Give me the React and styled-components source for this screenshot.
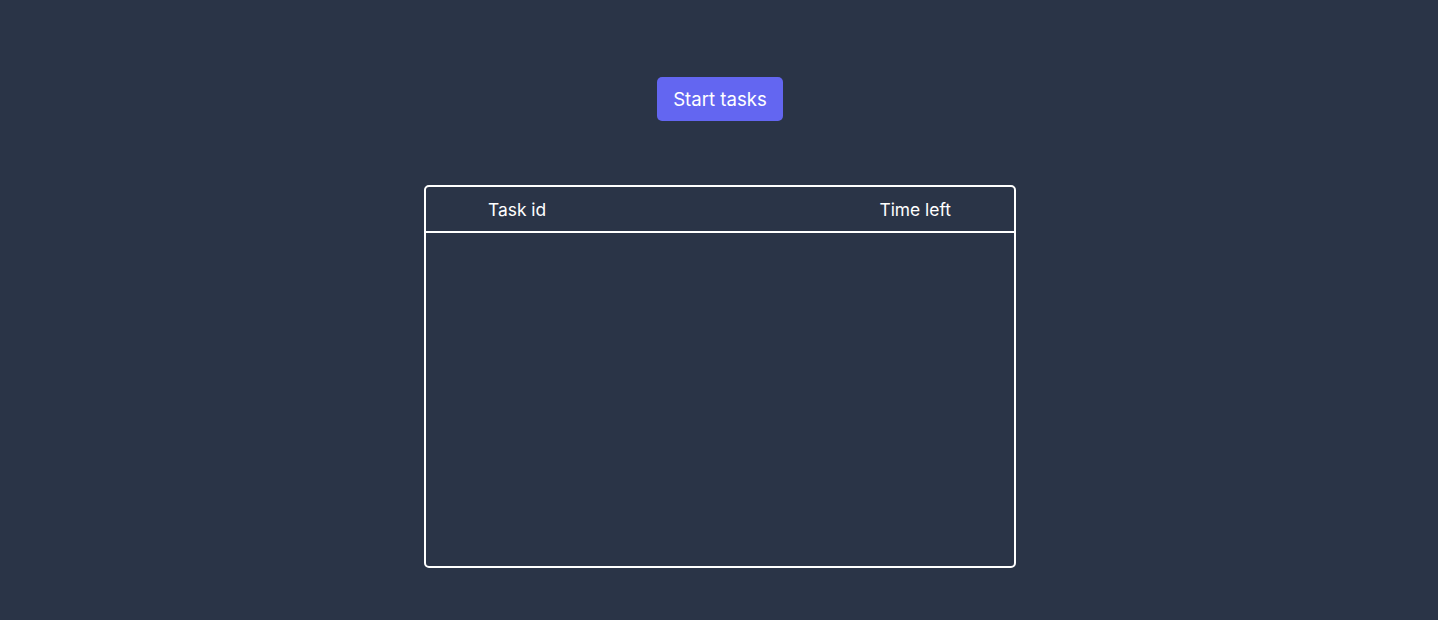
import styled, { createGlobalStyle } from 'styled-components'

const GlobalStyle = createGlobalStyle`
  html, body {
    margin: 0;
    padding: 0;
    background: #2a3447;
    font-family: Inter, "Noto Sans", sans-serif;
    color: #fff;
  }
`

const Page = styled.main`
  min-height: 620px;
  display: flex;
  flex-direction: column;
  align-items: center;
  padding: 77px 0 0 2px;
  box-sizing: border-box;
`

const StartButton = styled.button`
  height: 44px;
  padding: 0 16px;
  border: none;
  border-radius: 5px;
  background: #6366f1;
  color: #fff;
  font-family: inherit;
  font-size: 18.6px;
  cursor: pointer;
`

const TaskTable = styled.div`
  margin-top: 64px;
  width: 592px;
  height: 383px;
  box-sizing: border-box;
  border: 2px solid #fff;
  border-radius: 5px;
  display: flex;
  flex-direction: column;
`

const HeaderRow = styled.div`
  height: 46px;
  box-sizing: border-box;
  border-bottom: 2px solid #fff;
  display: flex;
  align-items: center;
  justify-content: space-between;
  padding: 0 63px 0 62px;
  font-size: 17.4px;
`

export default function App() {
  return (
    <>
      <GlobalStyle />
      <Page>
        <StartButton>Start tasks</StartButton>
        <TaskTable>
          <HeaderRow>
            <span>Task id</span>
            <span>Time left</span>
          </HeaderRow>
        </TaskTable>
      </Page>
    </>
  )
}
